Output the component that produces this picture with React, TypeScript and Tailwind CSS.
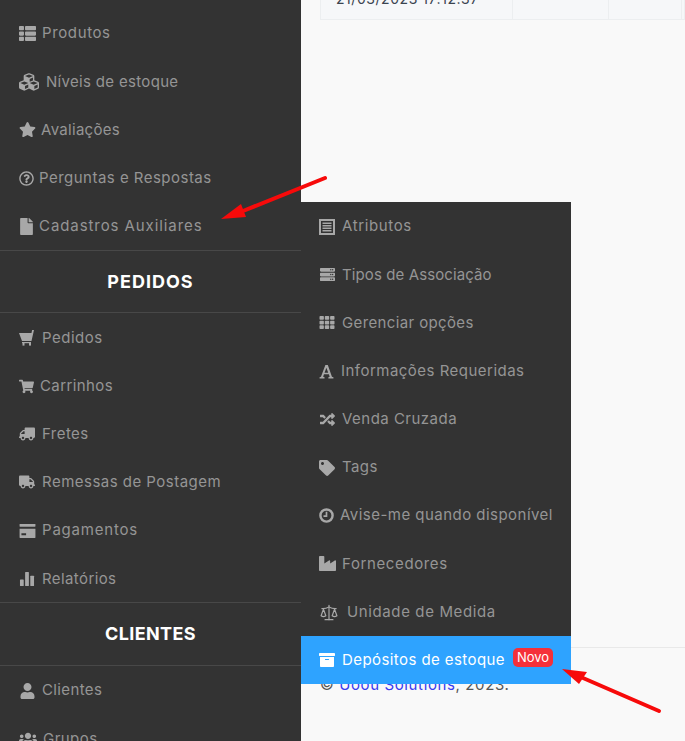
import React from 'react';
import { Scale } from 'lucide-react';
import {
  FaThList, FaCubes, FaStar, FaRegQuestionCircle, FaFile, FaShoppingCart, FaTruck,
  FaUser, FaUsers, FaServer, FaTh, FaRandom, FaTag,
  FaIndustry, FaArchive,
} from 'react-icons/fa';

const font = "font-['Inter','Liberation_Sans',sans-serif]";

type IconProps = { className?: string };

const BasketIcon = ({ className }: IconProps) => (
  <svg viewBox="0 0 16 16" className={className} fill="currentColor">
    <path d="M0 3h12.5l.6-3h1.9l-.3 1.2-2.2 9.8H3L0 3z" />
    <rect x="3" y="12" width="9" height="1.2" />
    <rect x="3.5" y="13" width="2" height="2.6" />
    <rect x="10" y="13" width="2" height="2.6" />
  </svg>
);

const BarsIcon = ({ className }: IconProps) => (
  <svg viewBox="0 0 16 16" className={className} fill="currentColor">
    <rect x="0.5" y="9" width="4" height="7" rx="0.6" />
    <rect x="6" y="1" width="4" height="15" rx="0.6" />
    <rect x="11.5" y="5" width="4" height="11" rx="0.6" />
  </svg>
);

// glyphicon style list box, the FA one is too thin
const ListBoxIcon = ({ className }: IconProps) => (
  <svg viewBox="0 0 16 16" className={className} fill="currentColor">
    <path fillRule="evenodd" d="M0 0h16v16H0V0zm2 2v12h12V2H2z" />
    <path d="M3.5 3.5h9v1.4h-9zM3.5 6h9v1.4h-9zM3.5 8.6h9V10h-9zM3.5 11.1h9v1.4h-9z" />
  </svg>
);

const CardIcon = ({ className }: IconProps) => (
  <svg viewBox="0 0 17 15" className={className} fill="currentColor">
    <rect x="0" y="0" width="17" height="3" rx="0.5" />
    <path fillRule="evenodd" d="M0 5h17v9.5a.5.5 0 0 1-.5.5H.5a.5.5 0 0 1-.5-.5V5zm2 5v2h5v-2H2z" />
  </svg>
);

const SerifAIcon = ({ className }: IconProps) => (
  <svg viewBox="0 0 16 16" className={className} fill="currentColor">
    <path fillRule="evenodd" d="M6.8 1h2.6l4.4 12.6 1.6.4V15.5H10v-1.5l1.4-.4-.9-2.8H5.3l-.9 2.8 1.5.4v1.5H.6V14l1.5-.4L6.8 1zM7.9 4 5.9 9.2h3.9L7.9 4z" />
  </svg>
);

const TimeIcon = ({ className }: IconProps) => (
  <svg viewBox="0 0 16 16" className={className} fill="none" stroke="currentColor">
    <circle cx="8" cy="8" r="6.5" strokeWidth="2.6" />
    <path d="M8 4v4.6H4.8" strokeWidth="1.8" />
  </svg>
);

const ScaleIcon = ({ className }: IconProps) => <Scale className={className} strokeWidth={1.5} />;

type Item = {
  icon: React.ElementType;
  label: string;
  col: string;
  size?: string;
  track?: string;
};

const block1: Item[] = [
  { icon: FaThList, label: 'Produtos', col: 'w-[23px]', size: 'w-[17px] h-[17px]', track: 'tracking-[0.62px]' },
  { icon: FaCubes, label: 'Níveis de estoque', col: 'w-[27px]', size: 'w-[20px] h-[20px]', track: 'tracking-[0.32px]' },
  { icon: FaStar, label: 'Avaliações', col: 'w-[22px]', size: 'w-[17px] h-[17px]', track: 'tracking-[0.3px]' },
  { icon: FaRegQuestionCircle, label: 'Perguntas e Respostas', col: 'w-[20px]', size: 'w-[15px] h-[15px]', track: 'tracking-[0.48px]' },
  { icon: FaFile, label: 'Cadastros Auxiliares', col: 'w-[20px]', size: 'w-[15px] h-[17px]', track: 'tracking-[0.92px]' },
];

const block2: Item[] = [
  { icon: BasketIcon, label: 'Pedidos', col: 'w-[23px]', size: 'w-[16px] h-[16px]', track: 'tracking-[0.5px]' },
  { icon: FaShoppingCart, label: 'Carrinhos', col: 'w-[21px]', size: 'w-[15px] h-[15px]', track: 'tracking-[0.4px]' },
  { icon: FaTruck, label: 'Fretes', col: 'w-[23px]', size: 'w-[16px] h-[14px] -scale-x-100', track: 'tracking-[0.45px]' },
  { icon: FaTruck, label: 'Remessas de Postagem', col: 'w-[23px]', size: 'w-[16px] h-[14px]', track: 'tracking-[0.48px]' },
  { icon: CardIcon, label: 'Pagamentos', col: 'w-[23px]', size: 'w-[17px] h-[14px]', track: 'tracking-[0.8px]' },
  { icon: BarsIcon, label: 'Relatórios', col: 'w-[23px]', size: 'w-[16px] h-[15px]', track: 'tracking-[0.4px]' },
];

const block3: Item[] = [
  { icon: FaUser, label: 'Clientes', col: 'w-[23px]', size: 'w-[17px] h-[16px]', track: 'tracking-[0.37px]' },
  { icon: FaUsers, label: 'Grupos', col: 'w-[24px]', size: 'w-[18px] h-[16px]', track: 'tracking-[0.45px]' },
];

const flyout: Item[] = [
  { icon: ListBoxIcon, label: 'Atributos', col: 'w-[23px]', size: 'w-[16px] h-[16px]', track: 'tracking-[0.62px]' },
  { icon: FaServer, label: 'Tipos de Associação', col: 'w-[23px]', size: 'w-[17px] h-[15px]', track: 'tracking-[0.1px]' },
  { icon: FaTh, label: 'Gerenciar opções', col: 'w-[23px]', size: 'w-[16px] h-[15px]', track: 'tracking-[0.37px]' },
  { icon: SerifAIcon, label: 'Informações Requeridas', col: 'w-[22px]', size: 'w-[15px] h-[15px]', track: 'tracking-[0.48px]' },
  { icon: FaRandom, label: 'Venda Cruzada', col: 'w-[23px]', size: 'w-[17px] h-[15px]', track: 'tracking-[0.48px]' },
  { icon: FaTag, label: 'Tags', col: 'w-[23px]', size: 'w-[16px] h-[16px]', track: 'tracking-[0.4px]' },
  { icon: TimeIcon, label: 'Avise-me quando disponível', col: 'w-[21px]', size: 'w-[15px] h-[15px]', track: 'tracking-[0.47px]' },
  { icon: FaIndustry, label: 'Fornecedores', col: 'w-[23px]', size: 'w-[17px] h-[17px]', track: 'tracking-[0.62px]' },
  { icon: ScaleIcon, label: 'Unidade de Medida', col: 'w-[28px]', size: 'w-[20px] h-[19px]', track: 'tracking-[0.62px]' },
];

const MenuRow = ({ item }: { item: Item }) => {
  const Icon = item.icon;
  return (
    <li className="flex h-[48.2px] items-center pt-[1px] text-[#959595]">
      <span className={`${item.col} shrink-0 text-[#a8a8a8]`}>
        <Icon className={`block ${item.size}`} />
      </span>
      <span className={`text-[15px] whitespace-nowrap ${item.track}`}>{item.label}</span>
    </li>
  );
};

const Section = ({ title, className }: { title: string; className: string }) => (
  <div className={`flex items-center justify-center border-y border-[#484848] text-[18px] font-bold text-white ${className}`}>
    {title}
  </div>
);

export default function App() {
  return (
    <div className={`relative flex h-[741px] w-[685px] overflow-hidden bg-[#f9f9f9] ${font}`}>
      {/* Sidebar */}
      <aside className="w-[301px] shrink-0 overflow-hidden bg-[#333333]">
        <ul className="mt-[9px] pl-[19px]">
          {block1.map((i) => <MenuRow key={i.label} item={i} />)}
        </ul>
        <Section title="PEDIDOS" className="h-[63px] tracking-[1px]" />
        <ul className="h-[289.2px] pt-[0.4px] pl-[19px]">
          {block2.map((i) => <MenuRow key={i.label} item={i} />)}
        </ul>
        <Section title="CLIENTES" className="h-[64px] pb-[1px] tracking-[0.4px]" />
        <ul className="pl-[19px]">
          {block3.map((i) => <MenuRow key={i.label} item={i} />)}
        </ul>
      </aside>

      {/* Main content */}
      <main className="flex flex-1 flex-col">
        <div className="ml-[19px] flex h-[20px] border border-t-0 border-[#eceef0] bg-[#f6f7f9] text-[14px] text-[#3b4450]">
          <div className="w-[192px] overflow-hidden border-r border-[#eceef0] pl-[15px] leading-[12px] tracking-[0.55px] whitespace-nowrap">
            <span className="relative -top-[7px]">21/03/2023 17:12:37</span>
          </div>
          <div className="w-[96px] border-r border-[#eceef0]" />
          <div className="w-[73px] border-r border-[#eceef0]" />
        </div>
        <footer className="mt-auto h-[94px] border-t border-[#e9e9e9] pt-[26px] pl-[19px] text-[15px] tracking-[0.62px] text-[#555]">
          © <span className="text-[#3a3aef]">Uoou Solutions</span>, 2023.
        </footer>
      </main>

      {/* Flyout submenu */}
      <div className="absolute top-[202px] left-[301px] w-[270px] bg-[#333333]">
        <ul className="pl-[18px]">
          {flyout.map((i) => <MenuRow key={i.label} item={i} />)}
        </ul>
        <div className="flex h-[48px] items-center bg-[#2ea3ff] pt-[1px] pl-[18px] text-white">
          <span className="w-[23px] shrink-0">
            <FaArchive className="block h-[16px] w-[16px]" />
          </span>
          <span className="text-[15px] tracking-[0.42px] whitespace-nowrap">Depósitos de estoque</span>
          <span className="ml-[8px] -translate-y-[3px] rounded-[5px] bg-[#f5303a] px-[4px] py-[2px] text-[13px] leading-[15px]">Novo</span>
        </div>
      </div>

      {/* Annotation arrows */}
      <svg className="absolute top-[170px] left-[215px] h-[55px] w-[115px]" viewBox="0 0 115 55" fill="#f70a0a">
        <line x1="110" y1="8" x2="28" y2="41" stroke="#f70a0a" strokeWidth="4" strokeLinecap="round" />
        <polygon points="6,49 26,34 31,47" />
      </svg>
      <svg className="absolute top-[660px] left-[555px] h-[56px] w-[110px]" viewBox="0 0 110 56" fill="#f70a0a">
        <line x1="104" y1="51" x2="28" y2="18" stroke="#f70a0a" strokeWidth="4" strokeLinecap="round" />
        <polygon points="7,9 32,12 24,24" />
      </svg>
    </div>
  );
}
